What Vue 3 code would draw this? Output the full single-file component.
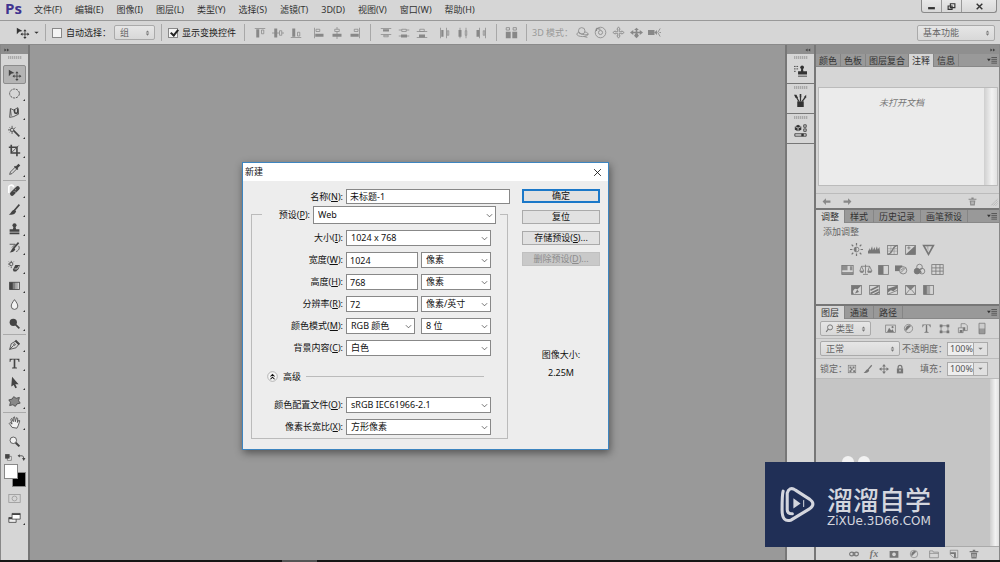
<script setup>
import { h, ref } from 'vue'

const F = 'fill="currentColor" stroke="none"'
const icons = {
  move: `<path ${F} d="M1 2l7 4-4 1-3 3z"/><path d="M11 6v8M7 10h8"/><path ${F} d="M11 4l2 2.500h-4zM11 16l2-2.500h-4zM5.500 10l2.500-2v4zM16.500 10l-2.500-2v4z"/>`,
  ellipse: `<ellipse cx="8" cy="8" rx="6" ry="5.500" stroke-dasharray="3 1"/>`,
  lasso: `<path d="M3 3l4 2 5-3 1 8-6 3-5 1z"/><path d="M8 4v3a2 2 0 0 0 4 0V3" stroke-width="2"/><path d="M3 4l1 8"/>`,
  wand: `<path d="M7 7l7 7" stroke-width="2"/><path d="M5 1v3M5 8v3M0 6h3M7 5l2-2M2 3l1 1M2 9l1-1"/><circle cx="5" cy="6" r="2"/>`,
  crop: `<path d="M4 1v10h11M1 4h10v11" stroke-width="2"/><path d="M5 10l8-8"/>`,
  dropper: `<path d="M2 14l1-3 6-6 2 2-6 6z"/><path d="M8 4l4 4" stroke-width="2"/><path d="M10 6l4-4" stroke-width="3"/>`,
  heal: `<path d="M5 12l7-7" stroke-width="5" stroke-linecap="round"/><path d="M1 11V5a3 3 0 0 1 6-1" stroke="#fff" stroke-width="2"/><path d="M7 9h1M9 7h1M9 10h1" stroke="#ddd"/>`,
  brush: `<path d="M14 2L8 9" stroke-width="2"/><path ${F} d="M8 8l2 2c-1 4-5 5-9 4 3-1 3-5 7-6z"/>`,
  stamp: `<circle cx="8" cy="4" r="2.500" ${F}/><path ${F} d="M7 5h2l1 4h4v3H2V9h4zM2 13h12v2H2z"/>`,
  history: `<path d="M13 2L7 9" stroke-width="2"/><path ${F} d="M7 8l2 2c-1 3-4 4-7 4 3-2 2-5 5-6z"/><path d="M2 4h7L5 8M13 6c2 3 0 6-3 7"/>`,
  eraser: `<path ${F} d="M6 12l3-6h6l-2 5-3 3H7z"/><path d="M4 1v2M4 8v2M0 5h2M1 2l1 1M7 2L6 3M1 8l1-1" /><circle cx="4" cy="5" r="2"/><path d="M8 11h3l3-4" stroke="#ddd"/>`,
  gradient: `<rect x="2" y="4" width="12" height="9"/><path ${F} d="M2 4h4v9H2z"/><path ${F} opacity=".6" d="M6 4h3v9H6z"/><path ${F} opacity=".3" d="M9 4h3v9H9z"/>`,
  drop: `<path fill="#f2f2f2" d="M8 2c3 4 4 6 4 8a4 4 0 0 1-8 0c0-2 1-4 4-8z"/>`,
  dodge: `<circle cx="6.500" cy="6.500" r="4.500" ${F}/><path d="M9 9l5 5" stroke-width="2"/>`,
  pen: `<path d="M2 14l2-7 5-3 4 4-3 4z"/><path d="M2 14l5-5"/><circle cx="8" cy="8" r="1"/><path d="M9 3l5 5" stroke-width="2.500"/>`,
  type: `<path ${F} d="M2 2h12v4h-1c0-2-1-3-3-3H9v9c0 1 1 1 2 1v1H5v-1c1 0 2 0 2-1V3H6C4 3 3 4 3 6H2z"/>`,
  arrow: `<path ${F} d="M5 1l8 9H9l2 4-2 1-2-4-3 2z"/>`,
  shape: `<path fill="#888" d="M7 2l3 2 4-1-1 4 2 3-4 1-2 3-3-2-4 1 1-4-2-3 4-1z"/>`,
  hand: `<path fill="#f2f2f2" d="M5 14L1.500 9l1-1L5 10 3.500 4l1-1 2 4V2l1.500-1 1 6 1.500-5 1.500 1-.500 5 2-3 1 1-2 6-1.500 3z"/>`,
  zoom: `<circle cx="6.500" cy="6.500" r="4" fill="#f2f2f2"/><path d="M9.500 9.500L14 14" stroke-width="2.500"/>`,
  mini: `<path fill="#eee" d="M6 6h7v7H6z"/><path ${F} d="M2 2h8v8H2z"/>`,
  swap: `<path d="M4 5h5q3 0 3 5" stroke-width="1.500"/><path ${F} d="M1 5l4-3v6zM12 14L9 9h6z"/>`,
  mask: `<rect x="1" y="3" width="14" height="10"/><circle cx="8" cy="8" r="3"/>`,
  screen: `<path fill="#eee" d="M1 8h9v6H1z"/><path fill="#fff" d="M5 3h10v7H5z"/><path d="M5 4h10M1 9h4" stroke-width="2"/>`,
  alTop: `<path d="M1 2h14"/><path ${F} d="M3 3h4v11H3z"/><path d="M10 4h3v5h-3z"/>`,
  alMid: `<path d="M0 8h16"/><path ${F} d="M3 2h4v12H3z"/><path fill="#d6d6d6" d="M10 5h3v6h-3z"/>`,
  alBot: `<path d="M1 14h14"/><path ${F} d="M3 2h4v11H3z"/><path d="M10 7h3v5h-3z"/>`,
  alLeft: `<path d="M2 1v14"/><path ${F} d="M3 9h11v4H3z"/><path d="M4 3h5v3H4z"/>`,
  alCen: `<path d="M8 0v16"/><path ${F} d="M2 9h12v4H2z"/><path fill="#d6d6d6" d="M5 3h6v3H5z"/>`,
  alRight: `<path d="M14 1v14"/><path ${F} d="M2 9h11v4H2z"/><path d="M7 3h5v3H7z"/>`,
  diV1: `<path d="M1 2h14M1 10h14"/><path ${F} d="M4 3h8v3H4z"/><path d="M5 11h6v2H5z"/>`,
  diV2: `<path d="M1 4h14M1 12h14"/><path ${F} d="M4 10h8v4H4z"/><path fill="#d6d6d6" d="M5 3h6v3H5z"/>`,
  diV3: `<path d="M1 6h14M1 14h14"/><path ${F} d="M4 10h8v4H4z"/><path d="M5 3h6v3H5z"/>`,
  diH1: `<path d="M2 1v14M10 1v14"/><path ${F} d="M3 4h3v9H3z"/><path d="M11 5h2v6h-2z"/>`,
  diH2: `<path d="M4 1v14M12 1v14"/><path ${F} d="M2 4h4v9H2z"/><path fill="#d6d6d6" d="M11 5h2v6h-2z"/>`,
  diH3: `<path d="M6 1v14M14 1v14"/><path ${F} d="M2 4h4v9H2z"/><path d="M11 5h2v6h-2z"/>`,
  auto: `<path ${F} d="M1 7h6v8H1zM9 7h6v8H9z"/><path d="M1.500 2h4v3h-4zM10 2h4v3h-4z"/>`,
  orbit: `<ellipse cx="8" cy="10" rx="7" ry="3"/><circle cx="7" cy="6" r="4" fill="#d6d6d6"/><path d="M3 7c2 3 9 5 12 3M10 13l4 1"/>`,
  roll: `<circle cx="8" cy="8" r="6.500"/><circle cx="8" cy="8" r="2.500"/><path d="M3 3l5 1M3 3v3" stroke-width="1.500"/>`,
  pan: `<path d="M8 1l2 3H9v3h3V6l3 2-3 2V9H9v3h1l-2 3-2-3h1V9H4v1L1 8l3-2v1h3V4H6z"/>`,
  slide: `<path ${F} d="M8 2l3 3H9v2h3V5l4 3-4 3V9H9l2 3-3 3-3-3 2-3H4v2L0 8l4-3v2h3V5H5z"/>`,
  camera: `<path ${F} d="M0 5h8v6H0zM8 8l3-3v6z"/><path d="M15 3l-3 5 3 5M14 8h2"/>`,
  spin: `<path ${F} d="M8 2l4 5H4zM8 14l4-5H4z"/>`,
  chev: `<path d="M2 5l6 6 6-6" stroke-width="1.700"/>`,
  down: `<path ${F} d="M3 6h10l-5 5z"/>`,
  collapse: `<path ${F} d="M1 4l6 4-6 4zM8 4l6 4-6 4z"/>`,
  expand: `<path ${F} d="M1 8l6-4v8zM8 8l6-4v8z"/>`,
  flyout: `<path ${F} d="M0 6h6l-3 4z"/><path d="M7 4h9M7 7h9M7 10h9M7 13h9"/>`,
  clone: `<circle cx="10" cy="4" r="2.300" ${F}/><path ${F} d="M9 5h2l.500 4H16v4H5V9h3.500z"/><path d="M0 3h2M3 3h2M0 6h2M3 6h2M0 9h2M5 15h11"/>`,
  brushes: `<path ${F} d="M4 9h8v7H4z"/><path d="M6 9L3 4M8 9V3M10 9l4-5" stroke-width="1.500"/><path ${F} d="M0 1l3 0 2 4-3 0zM7 0h2v4H7zM12 4l3-3v4z"/>`,
  props: `<path ${F} d="M1 3l4-2 4 2v4L5 9 1 7z"/><path d="M1 3l4 2 4-2M5 5v4" stroke="#d6d6d6"/><path d="M12 1h3v3h-3zM12 6h3v3h-3zM1 12h14v3H1z"/><path ${F} d="M9 12h3v3H9z"/>`,
  left: `<path ${F} d="M1 8l6-6v4h8v4H7v4z"/>`,
  right: `<path ${F} d="M15 8L9 2v4H1v4h8v4z"/>`,
  trash: `<path ${F} d="M3 6h10l-1 9H4zM1 3h14v2H1zM6 1h4v2H6z"/><path d="M6 8v5M8 8v5M10 8v5" stroke="#d6d6d6"/>`,
  grip: `<path d="M15 4L4 15M15 8l-7 7M15 12l-3 3" stroke-dasharray="2 1"/>`,
  sun: `<circle cx="8" cy="8" r="3"/><path ${F} d="M8 5a3 3 0 0 0 0 6z"/><path d="M8 0v3M8 13v3M0 8h3M13 8h3M2 2l2 2M12 12l2 2M14 2l-2 2M4 12l-2 2" stroke-width="1.500"/>`,
  levels: `<path ${F} d="M0 13V8l1 2 1-4 1 3 2-5 1 5 2-4 1 4 2-5 1 4 2-3 1 8z"/>`,
  curves: `<rect x="2" y="3" width="12" height="11"/><path d="M2 7h12M2 10h12M6 3v11M10 3v11" opacity=".5"/><path d="M2 14C9 13 7 4 14 3" stroke-width="1.500"/>`,
  expose: `<rect x="2" y="3" width="12" height="11"/><path ${F} d="M14 3v11H2z"/><path d="M4 6h4M6 4v4M10 11h3" />`,
  vib: `<path d="M2 3h12L8 14z" stroke-width="2"/><path ${F} d="M5 3h3v8z" opacity=".4"/>`,
  hue: `<rect x="1" y="3" width="14" height="11"/><path ${F} d="M1 3h7v6H1zM11 4h3v5h-3zM1 11h14v3H1z" opacity=".75"/>`,
  balance: `<path d="M8 2v11M3 4h10M5 14h6M3 4L1 10h5zM13 4l-2 6h5z"/><path ${F} d="M1 10h5l-1 2H2zM10 10h6l-1 2h-4z"/>`,
  bw: `<rect x="2" y="3" width="12" height="11"/><path ${F} d="M2 3h6v11H2z"/>`,
  photo: `<path ${F} d="M0 3h9v7H0z"/><circle cx="10" cy="9" r="4.500" fill="#d6d6d6"/><path d="M7 12l6-6M7 9l4-3"/>`,
  mixer: `<circle cx="8" cy="5" r="3.500"/><circle cx="5" cy="10" r="3.500" fill="currentColor"/><circle cx="11" cy="10" r="3.500"/><path ${F} d="M8 7l3 5H6z"/>`,
  grid: `<rect x="1" y="2" width="14" height="12"/><path d="M1 6h14M1 10h14M6 2v12M11 2v12"/>`,
  invert: `<rect x="2" y="3" width="12" height="11"/><path ${F} d="M2 3h12L9 8a3 3 0 0 0-4 5l-3 1z"/><path ${F} d="M9 8l2 3-5 2z"/>`,
  poster: `<rect x="2" y="3" width="12" height="11"/><path d="M3 9l10-5M3 13l10-5M8 14l6-3" stroke-width="2"/>`,
  thresh: `<rect x="2" y="3" width="12" height="11"/><path ${F} d="M2 12l4-3 3 1 5-4V3L2 7z"/><path d="M2 14l12-5"/>`,
  selcol: `<rect x="2" y="3" width="12" height="11"/><path ${F} d="M2 3h12L8 9z" opacity=".9"/><path d="M2 14l5-6M14 14L9 8"/>`,
  gmap: `<rect x="2" y="3" width="12" height="11"/><path ${F} d="M2 3h4v11H2z"/><path ${F} d="M6 3h4v11H6z" opacity=".5"/>`,
  image: `<rect x="1" y="3" width="14" height="11"/><path ${F} d="M3 13l3-6 3 4 2-2 2 4z"/><circle cx="11" cy="6" r="1.500" ${F}/>`,
  half: `<circle cx="8" cy="8" r="6"/><path ${F} d="M12 4a6 6 0 0 0-8 8z"/>`,
  frame: `<path d="M3 4h10v9H3z"/><path ${F} d="M1 2h4v4H1zM11 2h4v4h-4zM1 11h4v4H1zM11 11h4v4h-4z"/>`,
  smart: `<path d="M6 1h6l3 3v7H6z"/><path d="M2 7h7v7H2z" fill="#d6d6d6"/><path ${F} d="M4 10h4v4H4zM9 6h3v5H9z"/>`,
  toggle: `<path fill="#ccc" d="M4 1h8v14H4z"/><path ${F} d="M4 8h8v7H4z" opacity=".6"/>`,
  search: `<circle cx="9" cy="6" r="4.500" stroke-width="1.700"/><path d="M6 9l-4 5" stroke-width="2"/>`,
  checker: `<rect x="2" y="2" width="12" height="12"/><path ${F} d="M4 4h3v3H4zM9 4h3v3H9zM6 7h3v3H6zM4 10h3v3H4zM10 10h3v3h-3z"/>`,
  cross: `<path d="M8 2v12M2 8h12" stroke-width="1.500"/><path ${F} d="M8 0l3 4H5zM8 16l3-4H5zM0 8l4-3v6zM16 8l-4-3v6z"/>`,
  lock: `<path ${F} d="M3 7h10v8H3z"/><path d="M5 7V5a3 3 0 0 1 6 0v2" stroke-width="2"/><path d="M8 9v3" stroke="#ddd" stroke-width="2"/>`,
  link: `<ellipse cx="4.500" cy="8" rx="3.500" ry="3" stroke-width="1.700"/><ellipse cx="11.500" cy="8" rx="3.500" ry="3" stroke-width="1.700"/><path d="M5 8h6" stroke-width="1.500"/>`,
  addmask: `<path ${F} fill-rule="evenodd" d="M1 3h14v11H1zM8 5.500a3 3 0 1 0 .1 0z"/>`,
  folder: `<path d="M1 3h5l1 2h8v9H1zM1 7h14"/>`,
  page: `<path d="M2 2h12v12H8L2 9z"/><path ${F} d="M8 14V8H2V5h9v9z"/>`,
  min: `<path ${F} d="M2 9h12v4H2z"/>`,
  restore: `<path d="M6 3h8v7H6zM2 7h7v6H2z" stroke-width="2"/>`,
  close: `<path d="M3 3l10 10M13 3L3 13" stroke-width="2.500"/>`,
  closeThin: `<path d="M2 2l12 12M14 2L2 14" stroke-width="1.500"/>`,
  upup: `<circle cx="8" cy="8" r="7" fill="#f6f6f6" stroke="#999"/><path d="M5 8l3-3 3 3M5 12l3-3 3 3" stroke-width="1.500"/>`,
}
const Icon = (p) => h('svg', { viewBox: '0 0 16 16', class: 'icon', 'aria-hidden': 'true', innerHTML: icons[p.name] })

const menus = ['文件(F)', '编辑(E)', '图像(I)', '图层(L)', '类型(Y)', '选择(S)', '滤镜(T)', '3D(D)', '视图(V)', '窗口(W)', '帮助(H)']
const alignGroups = [['alTop', 'alMid', 'alBot'], ['alLeft', 'alCen', 'alRight']]
const distGroups = [['diV1', 'diV2', 'diV3'], ['diH1', 'diH2', 'diH3']]
const modes = ['orbit', 'roll', 'pan', 'slide', 'camera']
const toolGroups = [
  ['move', 'ellipse', 'lasso', 'wand', 'crop', 'dropper'],
  ['heal', 'brush', 'stamp', 'history', 'eraser', 'gradient', 'drop', 'dodge'],
  ['pen', 'type', 'arrow', 'shape'],
  ['hand', 'zoom'],
]
const noCorner = ['move', 'zoom']
const noteTabs = ['颜色', '色板', '图层复合', '注释', '信息']
const adjTabs = ['调整', '样式', '历史记录', '画笔预设']
const layerTabs = ['图层', '通道', '路径']
const adjRows = [
  ['sun', 'levels', 'curves', 'expose', 'vib'],
  ['hue', 'balance', 'bw', 'photo', 'mixer', 'grid'],
  ['invert', 'poster', 'thresh', 'selcol', 'gmap'],
]
const filters = ['image', 'half', 'type', 'frame', 'smart']
const locks = ['checker', 'brush', 'cross', 'lock']
const layerActions = ['link', 'fx', 'addmask', 'half', 'folder', 'page', 'trash']

const docName = ref('未标题-1')
const rows = [
  { id: 'size', label: '大小', key: 'I', fields: [{ select: '1024 x 768' }] },
  { id: 'width', label: '宽度', key: 'W', fields: [{ input: '1024' }, { select: '像素' }] },
  { id: 'height', label: '高度', key: 'H', fields: [{ input: '768' }, { select: '像素' }] },
  { id: 'res', label: '分辨率', key: 'R', fields: [{ input: '72' }, { select: '像素/英寸' }] },
  { id: 'mode', label: '颜色模式', key: 'M', fields: [{ select: 'RGB 颜色' }, { select: '8 位' }] },
  { id: 'bg', label: '背景内容', key: 'C', fields: [{ select: '白色' }] },
]
const advanced = [
  { id: 'profile', label: '颜色配置文件', key: 'O', value: 'sRGB IEC61966-2.1' },
  { id: 'aspect', label: '像素长宽比', key: 'X', value: '方形像素' },
]
</script>

<template>
  <div class="app">
    <header class="menubar">
      <span class="brand">Ps</span>
      <nav class="menus"><button v-for="m in menus" :key="m" type="button">{{ m }}</button></nav>
      <div class="winctl">
        <button type="button" aria-label="最小化"><Icon name="min" /></button>
        <button type="button" aria-label="还原"><Icon name="restore" /></button>
        <button type="button" class="wide" aria-label="关闭"><Icon name="close" /></button>
      </div>
    </header>

    <div class="options">
      <div class="current"><Icon name="move" /><Icon name="down" class="tiny" /></div>
      <i class="vsep"></i>
      <label class="check"><input type="checkbox" />自动选择：</label>
      <span class="drop group"><select aria-label="选择类型" disabled><option>组</option></select><Icon name="spin" /></span>
      <i class="vsep"></i>
      <label class="check"><input type="checkbox" checked />显示变换控件</label>
      <i class="vsep"></i>
      <div class="optgroups">
        <div v-for="(g, i) in alignGroups" :key="i" class="optgroup"><button v-for="n in g" :key="n" type="button" :aria-label="n"><Icon :name="n" /></button></div>
      </div>
      <i class="vsep"></i>
      <div class="optgroups">
        <div v-for="(g, i) in distGroups" :key="i" class="optgroup"><button v-for="n in g" :key="n" type="button" :aria-label="n"><Icon :name="n" /></button></div>
      </div>
      <i class="vsep"></i>
      <button type="button" class="autobtn" aria-label="自动对齐"><Icon name="auto" /></button>
      <i class="vsep"></i>
      <span class="dim">3D 模式：</span>
      <div class="optgroup modes"><button v-for="n in modes" :key="n" type="button" :aria-label="n"><Icon :name="n" /></button></div>
      <span class="drop workspace-sel"><select aria-label="工作区"><option>基本功能</option></select><Icon name="spin" /></span>
    </div>

    <main class="work">
      <aside class="tools">
        <div class="railhead"><Icon name="collapse" /></div>
        <i class="dots"></i>
        <div v-for="(g, i) in toolGroups" :key="i" class="toolgroup">
          <button v-for="n in g" :key="n" type="button" :class="['tool', { on: n === 'move', corner: !noCorner.includes(n) }]" :aria-label="n"><Icon :name="n" /></button>
        </div>
        <div class="minis"><Icon name="mini" /><Icon name="swap" /></div>
        <div class="swatches"><i class="back"></i><i class="fore"></i></div>
        <button type="button" class="tool faded" aria-label="快速蒙版"><Icon name="mask" /></button>
        <button type="button" class="tool corner" aria-label="屏幕模式"><Icon name="screen" /></button>
      </aside>

      <section class="canvas"></section>

      <aside class="dock">
        <div class="railhead end"><Icon name="expand" /></div>
        <button v-for="n in ['clone', 'brushes', 'props']" :key="n" type="button" class="dockitem" :aria-label="n"><i class="dots"></i><Icon :name="n" /></button>
      </aside>

      <aside class="panels">
        <div class="railhead end"><Icon name="collapse" /></div>
        <section class="panel">
          <div class="tabs tight"><button v-for="t in noteTabs" :key="t" type="button" :class="{ active: t === '注释' }">{{ t }}</button><Icon name="flyout" class="fly" /></div>
          <div class="notes"><div class="notetext">未打开文档</div><i class="scroll"></i></div>
          <div class="notebar"><Icon name="left" /><Icon name="right" /><Icon name="trash" class="push" /><Icon name="grip" /></div>
        </section>
        <section class="panel">
          <div class="tabs"><button v-for="t in adjTabs" :key="t" type="button" :class="{ active: t === '调整' }">{{ t }}</button><Icon name="flyout" class="fly" /></div>
          <div class="adjust">
            <p>添加调整</p>
            <div v-for="(r, i) in adjRows" :key="i" class="adjrow"><button v-for="n in r" :key="n" type="button" :aria-label="n"><Icon :name="n" /></button></div>
          </div>
        </section>
        <section class="panel layers">
          <div class="tabs"><button v-for="t in layerTabs" :key="t" type="button" :class="{ active: t === '图层' }">{{ t }}</button><Icon name="flyout" class="fly" /></div>
          <div class="lrow">
            <span class="drop kind"><Icon name="search" class="lead" /><select aria-label="过滤类型"><option>类型</option></select><Icon name="spin" /></span>
            <div class="filters"><Icon v-for="n in filters" :key="n" :name="n" /></div>
            <Icon name="toggle" class="toggle" />
          </div>
          <div class="lrow">
            <span class="drop blend"><select aria-label="混合模式"><option>正常</option></select><Icon name="spin" /></span>
            <label class="numlabel" for="opacity">不透明度：</label>
            <span class="num"><input id="opacity" value="100%" /><Icon name="down" /></span>
          </div>
          <div class="lrow">
            <span class="locktext">锁定：</span>
            <div class="locks"><Icon v-for="n in locks" :key="n" :name="n" /></div>
            <label class="numlabel" for="fill">填充：</label>
            <span class="num"><input id="fill" value="100%" /><Icon name="down" /></span>
          </div>
          <div class="list"><i class="scroll"></i></div>
          <div class="actions">
            <button v-for="n in layerActions" :key="n" type="button" :aria-label="n"><em v-if="n === 'fx'">fx</em><Icon v-else :name="n" /></button>
          </div>
        </section>
      </aside>

      <form class="dialog" role="dialog" aria-label="新建" @submit.prevent>
        <div class="title"><span>新建</span><button type="button" aria-label="关闭"><Icon name="closeThin" /></button></div>
        <div class="body">
          <div class="left">
            <div class="namerow">
              <label for="name">名称(<u>N</u>):</label>
              <input id="name" v-model="docName" class="box" />
            </div>
            <fieldset>
              <legend>
                <label for="preset">预设(<u>P</u>):</label>
                <span class="pick"><select id="preset"><option>Web</option></select><Icon name="chev" /></span>
              </legend>
              <div v-for="r in rows" :key="r.id" class="row">
                <label :for="r.id">{{ r.label }}(<u>{{ r.key }}</u>):</label>
                <div :class="['fields', r.id, { two: r.fields.length > 1 }]">
                  <template v-for="(f, i) in r.fields" :key="i">
                    <input v-if="f.input" :id="r.id" class="box" :value="f.input" />
                    <span v-else class="pick"><select :id="i ? r.id + '-unit' : r.id" :aria-label="r.label"><option>{{ f.select }}</option></select><Icon name="chev" /></span>
                  </template>
                </div>
              </div>
              <button type="button" class="adv"><Icon name="upup" /><span>高级</span><i></i></button>
              <div v-for="r in advanced" :key="r.id" class="row">
                <label :for="r.id">{{ r.label }}(<u>{{ r.key }}</u>):</label>
                <span class="pick"><select :id="r.id"><option>{{ r.value }}</option></select><Icon name="chev" /></span>
              </div>
            </fieldset>
          </div>
          <div class="right">
            <button type="submit" class="btn primary">确定</button>
            <button type="button" class="btn">复位</button>
            <button type="button" class="btn">存储预设(<u>S</u>)...</button>
            <button type="button" class="btn" disabled>删除预设(<u>D</u>)...</button>
            <div class="info"><div>图像大小:</div><div>2.25M</div></div>
          </div>
        </div>
      </form>
    </main>

    <div class="blob"><i></i><i></i></div>
    <div class="mark">
      <svg class="logo" viewBox="0 0 34 36" aria-hidden="true">
        <path d="M3 5C2 8 2 12 2 23c0 9 3 12 9 10l18-11c4-3 4-6 0-9L15 4C11 1 8 3 7 7v16c0 3 2 4 5 4" />
        <path class="solid" d="M13 12l7 5-7 5z" />
        <path class="thin" d="M23 14v6" />
      </svg>
      <div><div class="cn">溜溜自学</div><div class="url">ZiXUe.3D66.COM</div></div>
    </div>
    <footer class="taskbar"><i></i></footer>
  </div>
</template>

<style>
html, body { margin: 0; background: #999; }
</style>

<style scoped>
* { box-sizing: border-box; }
.app { position: relative; height: 100vh; min-height: 562px; display: flex; flex-direction: column; overflow: hidden; color: #333; font: 9px/14px "Noto Sans", "Noto Sans CJK SC", sans-serif; }
button, input, select { font: inherit; color: inherit; margin: 0; padding: 0; border: 0; background: none; border-radius: 0; outline: 0; min-width: 0; }
select { appearance: none; width: 100%; height: 100%; opacity: 1; }
i { display: block; font-style: normal; }
.icon { display: block; flex: none; width: 13px; height: 13px; fill: none; stroke: currentColor; stroke-width: 1; overflow: visible; }
button { display: flex; align-items: center; justify-content: center; white-space: nowrap; }

.menubar { display: flex; align-items: center; height: 20px; background: #d6d6d6; padding-left: 5px; }
.brand { width: 29px; height: 20px; font: bold 15px/17px "Open Sans", sans-serif; color: #40338f; }
.menus { display: flex; gap: 13px; flex: 1; height: 18px; }
.winctl { display: flex; align-self: flex-start; height: 13px; margin-right: 3px; border: 1px solid #8a8a8a; border-top: 0; border-radius: 0 0 3px 3px; background: linear-gradient(#e8e8e8, #d8d8d8); }
.winctl button { width: 20px; border-right: 1px solid #999; }
.winctl .wide { width: 34px; border: 0; }
.winctl .icon { width: 9px; height: 9px; }

.options { display: flex; align-items: center; height: 25px; background: #d6d6d6; border-top: 1px solid #999; border-bottom: 1px solid #8a8a8a; padding: 0 5px 0 16px; }
.current { display: flex; align-items: center; gap: 4px; width: 29px; }
.tiny { width: 7px; height: 7px; }
.vsep { width: 1px; height: 17px; background: #a8a8a8; flex: none; }
.check { display: flex; align-items: center; gap: 4px; margin: 0 8px 0 6px; white-space: nowrap; color: #222; }
.check input { appearance: none; position: relative; width: 10px; height: 10px; border: 1px solid #888; background: #f4f4f4; }
.check input:checked::after { content: ""; position: absolute; left: 3px; top: -1px; width: 3px; height: 6px; border: solid #222; border-width: 0 2px 2px 0; transform: rotate(40deg); }
.drop { position: relative; display: flex; align-items: center; height: 15px; border: 1px solid #aaa; border-radius: 2px; background: linear-gradient(#e6e6e6, #d8d8d8); }
.drop select { padding-left: 5px; color: #666; }
.drop .icon { position: absolute; right: 3px; width: 7px; height: 8px; color: #777; pointer-events: none; }
.drop .icon.lead { left: 4px; right: auto; width: 9px; height: 9px; }
.group { width: 41px; margin-right: 6px; margin-left: -5px; }
.optgroups { display: flex; gap: 11px; padding: 0 9px; color: #888; }
.optgroup { display: flex; gap: 6px; }
.optgroup .icon { width: 12px; height: 12px; }
.autobtn { margin: 0 8px; color: #888; }
.dim { color: #999; padding-left: 5px; white-space: nowrap; }
.modes { gap: 5px; color: #888; padding-left: 3px; }
.modes .icon { width: 13px; height: 13px; }
.workspace-sel { width: 78px; height: 16px; margin-left: auto; }

.work { position: relative; flex: 1; display: flex; min-height: 0; }
.railhead { display: flex; align-items: center; width: 100%; height: 9px; padding: 0 3px; background: #8f8f8f; color: #444; flex: none; }
.railhead.end { justify-content: flex-end; }
.railhead .icon { width: 6px; height: 6px; }
.dots { width: 14px; height: 3px; background: repeating-linear-gradient(90deg, #aaa 0 1px, #c8c8c8 1px 2px); }
.tools { width: 30px; display: flex; flex-direction: column; align-items: center; background: #d6d6d6; border-left: 1px solid #888; border-right: 2px solid #777; color: #444; }
.tools > .dots { margin: 2px 0 6px; }
.toolgroup { width: 23px; }
.toolgroup + .toolgroup { border-top: 1px solid #aaa; margin-top: 1px; }
.tool { position: relative; width: 23px; height: 19px; }
.tool.on { background: #b4b4b4; border: 1px solid #8c8c8c; border-radius: 2px; }
.tool.corner::after { content: ""; position: absolute; right: 1px; bottom: 2px; border: 1px solid #333; border-top-color: transparent; border-left-color: transparent; }
.tool.faded { color: #999; }
.minis { display: flex; justify-content: space-between; width: 22px; height: 13px; align-items: center; }
.minis .icon { width: 9px; height: 9px; }
.swatches { display: grid; grid-template: 8px 16px / 8px 14px; width: 22px; margin-bottom: 1px; }
.fore, .back { width: 14px; height: 15px; border: 1px solid #888; }
.fore { grid-area: 1 / 1; background: #fff; z-index: 1; }
.back { grid-area: 2 / 2; background: #000; }
.canvas { flex: 1; background: #999; }

.dock { width: 31px; display: flex; flex-direction: column; background: #d6d6d6; border-left: 2px solid #777; border-right: 2px solid #777; }
.dockitem { flex-direction: column; justify-content: flex-start; gap: 5px; height: 30px; padding-top: 2px; border-bottom: 1px solid #777; color: #333; }
.panels { width: 184px; display: flex; flex-direction: column; background: #d6d6d6; border-right: 1px solid #888; }
.panel { border-bottom: 2px solid #777; }
.tabs { display: flex; height: 13px; background: #999; border-bottom: 1px solid #888; }
.tabs button { height: 13px; padding: 0 5px; border-right: 1px solid #858585; color: #333; }
.tabs.tight button { padding: 0 3px; }
.tabs button.active { background: #d6d6d6; }
.fly { width: 10px; height: 10px; margin: 1px 2px 0 auto; }
.notes { display: flex; height: 99px; margin: 20px 1px 7px 2px; border: 1px solid #bbb; background: #ebebeb; }
.notetext { flex: 1; padding-top: 8px; text-align: center; font-style: italic; color: #777; }
.scroll { width: 13px; margin-left: auto; background: linear-gradient(90deg, #cfcfcf, #f2f2f2 60%, #e2e2e2); }
.notebar { display: flex; align-items: center; gap: 12px; height: 15px; padding: 0 1px 0 6px; border-top: 1px solid #bbb; color: #888; }
.notebar .icon { width: 9px; height: 9px; }
.push { margin-left: auto; }
.adjust { height: 81px; color: #777; }
.adjust p { margin: 0; padding: 1px 7px 0; line-height: 15px; color: #666; }
.adjrow { display: flex; justify-content: center; gap: 5px; height: 20px; padding-right: 30px; }
.layers { flex: 1; display: flex; flex-direction: column; border-bottom: 0; min-height: 0; }
.lrow { display: flex; align-items: center; height: 20px; padding: 0 11px 0 4px; border-bottom: 1px solid #bbb; color: #777; flex: none; }
.kind { width: 51px; }
.kind select { padding-left: 15px; }
.filters { display: flex; gap: 7px; margin-left: 14px; }
.filters .icon { width: 11px; height: 11px; }
.toggle { margin-left: auto; width: 12px; }
.blend { width: 80px; }
.numlabel { margin-left: auto; white-space: nowrap; color: #666; }
.num { display: flex; align-items: center; width: 41px; height: 14px; border: 1px solid #aaa; background: #e0e0e0; }
.num input { width: 26px; height: 12px; padding-left: 2px; background: #eee; border-right: 1px solid #aaa; color: #555; }
.num .icon { width: 7px; height: 7px; margin: auto; }
.locktext { width: 27px; color: #666; white-space: nowrap; }
.locks { display: flex; gap: 6px; }
.locks .icon { width: 10px; height: 10px; }
.list { flex: 1; display: flex; background: #c5c5c5; min-height: 20px; }
.list .scroll { width: 9px; }
.actions { display: flex; gap: 8px; justify-content: flex-end; height: 14px; padding-right: 19px; color: #777; border-top: 1px solid #aaa; }
.actions button { width: 12px; }
.actions .icon { width: 10px; height: 10px; }
.actions em { font: italic bold 10px/12px "Liberation Serif", serif; }

.dialog { position: absolute; left: 242px; top: 117px; width: 367px; background: #ededed; border: 1px solid #3d85c0; box-shadow: 1px 3px 8px rgba(0, 0, 0, .45); color: #111; }
.title { display: flex; align-items: center; justify-content: space-between; height: 18px; padding: 0 6px 0 2px; background: #fff; }
.title .icon { width: 9px; height: 9px; }
.body { display: flex; gap: 12px; padding: 8px 8px 10px; }
.left { width: 259px; }
.namerow { display: grid; grid-template-columns: 1fr 164px; gap: 3px; align-items: center; height: 15px; }
label { text-align: right; white-space: nowrap; }
.box { width: 100%; height: 100%; border: 1px solid #888; background: #fff; padding: 0 3px; }
fieldset { width: 257px; min-width: 0; margin: 0; padding: 6px 0 3px; border: 1px solid #bbb; display: flex; flex-direction: column; gap: 6px; }
legend { display: flex; align-items: center; justify-content: flex-end; gap: 3px; width: 238px; height: 20px; margin-left: 10px; padding: 2px 4px 0 0; }
.pick { position: relative; display: block; height: 100%; background: #fff; border: 1px solid #888; }
.pick select { display: block; padding: 0 14px 0 4px; }
.pick .icon { position: absolute; right: 2px; top: 50%; width: 7px; height: 7px; margin-top: -3px; color: #444; pointer-events: none; }
legend .pick { width: 183px; }
.row { display: grid; grid-template-columns: 1fr 145px; gap: 3px; align-items: center; height: 16px; margin-right: 16px; }
.fields { display: grid; height: 16px; gap: 3px; }
.fields.two { grid-template-columns: 72px 70px; }
.fields.mode { grid-template-columns: 69px 70px; gap: 6px; }
.adv { height: 29px; justify-content: flex-start; gap: 5px; padding: 0 23px 0 15px; }
.adv .icon { width: 11px; height: 11px; }
.adv i { flex: 1; height: 1px; background: #bbb; }
.right { flex: 1; display: flex; flex-direction: column; gap: 7px; }
.btn { height: 14px; border: 1px solid #aaa; background: #e1e1e1; }
.btn.primary { border: 2px solid #1b78c8; }
.btn:disabled { background: #c9c9c9; border-color: #c0c0c0; color: #8c8c8c; }
.info { margin-top: 73px; line-height: 18px; text-align: center; }

.blob { position: absolute; right: 130px; bottom: 94px; display: flex; gap: 4px; }
.blob i { width: 12px; height: 12px; border-radius: 6px; background: #f2f2f2; }
.mark { position: absolute; right: 55px; bottom: 15px; width: 180px; height: 85px; display: flex; align-items: center; gap: 12px; padding-left: 15px; background: #202f56; color: #d4d6de; white-space: nowrap; }
.logo { width: 35px; height: 37px; fill: none; stroke: currentColor; stroke-width: 3; stroke-linejoin: round; stroke-linecap: round; }
.logo .thin { stroke-width: 1; }
.logo .solid { fill: currentColor; stroke: none; }
.cn { font: 500 26px/32px "Noto Sans CJK SC", sans-serif; }
.url { font: 12px/12px "DejaVu Sans", sans-serif; }
.taskbar { height: 2px; background: #161616; flex: none; }
.taskbar i { width: 35px; height: 2px; margin-left: 282px; background: #555; }
</style>
